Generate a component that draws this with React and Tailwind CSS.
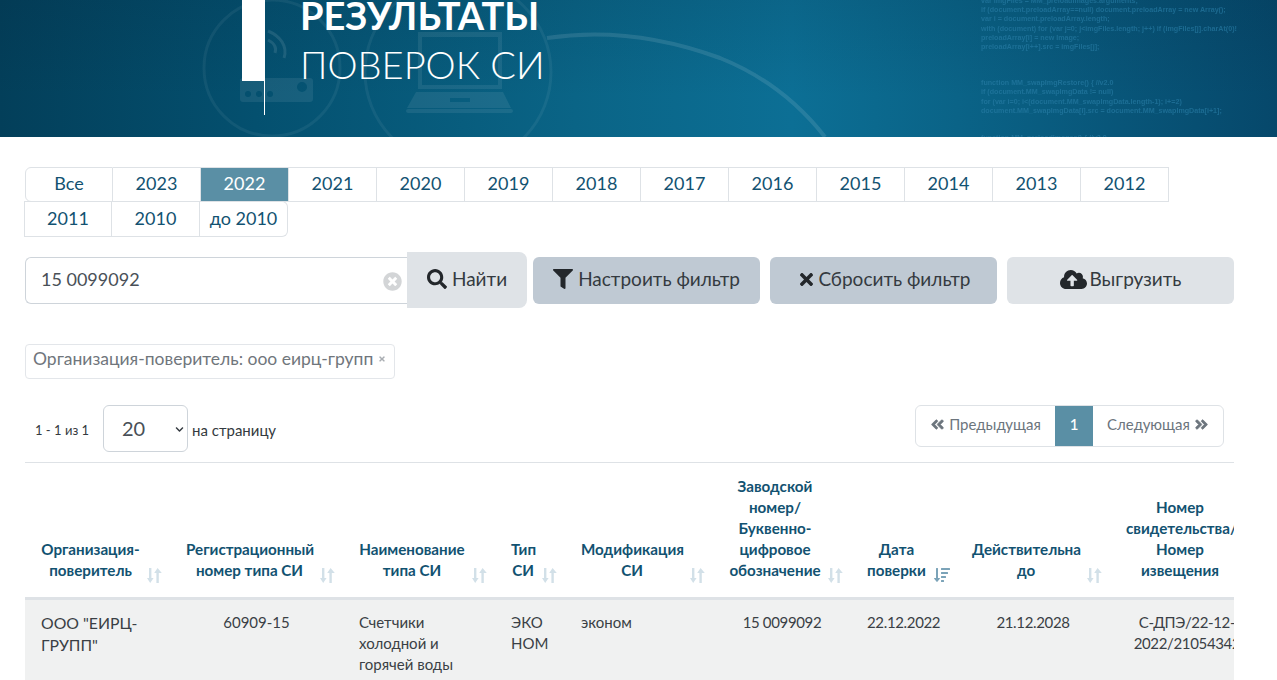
import React from 'react';
import { FaSearch, FaFilter, FaTimes, FaCloudUploadAlt, FaTimesCircle, FaAngleDoubleLeft, FaAngleDoubleRight, FaChevronDown, FaSortAmountDown } from 'react-icons/fa';

const years = ['Все','2023','2022','2021','2020','2019','2018','2017','2016','2015','2014','2013','2012','2011','2010','до 2010'];

const code1 = ['var imgFiles = MM_preloadImages.arguments;','if (document.preloadArray==null) document.preloadArray = new Array();','var i = document.preloadArray.length;','with (document) for (var j=0; j<imgFiles.length; j++) if (imgFiles[j].charAt(0)!','preloadArray[i] = new Image;','preloadArray[i++].src = imgFiles[j];'];
const code2 = ['function MM_swapImgRestore() { //v2.0','if (document.MM_swapImgData != null)','for (var i=0; i<(document.MM_swapImgData.length-1); i+=2)','document.MM_swapImgData[i].src = document.MM_swapImgData[i+1];'];

function Sort({ active }) {
  if (active) {
    return <span className="absolute right-[6px] bottom-[14px] text-[#7ba3b8]"><FaSortAmountDown size={16} /></span>;
  }
  return (
    <svg className="absolute right-[7px] bottom-[14px] text-[#d2e0e8]" width="16" height="15" viewBox="0 0 16 15" fill="currentColor">
      <path d="M2 0h2.4v10H6.6L3.2 15 0 10h2z" />
      <path d="M11.8 15h-2.4V5H7.2L10.6 0 14.8 5h-3z" />
    </svg>
  );
}

function Th({ children, active }) {
  return (
    <th className="relative align-bottom pl-4 pr-[30px] pt-[13px] pb-[16px] text-center text-[15.2px] leading-[21px] font-bold text-[#125271] border-b-[3px] border-[#dee2e6]">
      {children}
      <Sort active={active} />
    </th>
  );
}

function Td({ children, center, num }) {
  return <td className={`align-top px-4 pt-[12px] pb-[14px] text-[15px] leading-[21px] text-[#3a3f45] ${center ? 'text-center' : 'text-left'} ${num ? 'tracking-[-0.35px]' : ''}`}>{children}</td>;
}

function Banner() {
  return (
    <header className="relative h-[137px] overflow-hidden bg-[linear-gradient(90deg,#033f5a_0%,#04506f_20%,#0a6486_45%,#0c6f95_62%,#0a6387_75%,#06486b_100%)]">
      <div className="absolute inset-0 bg-[linear-gradient(180deg,rgba(0,30,50,0.12)_0%,rgba(0,30,50,0)_70%)]" />
      <svg className="absolute inset-0 blur-[0.6px]" width="1277" height="137" viewBox="0 0 1277 137" fill="none">
        <g stroke="#ffffff" strokeOpacity="0.06" strokeWidth="3">
          <circle cx="272" cy="68" r="68" />
          <circle cx="458" cy="72" r="93" />
          <path d="M547 38C600 30 660 36 720 58C765 76 800 105 825 137" strokeOpacity="0.11" strokeWidth="4" />
          <path d="M268 31C280 36 288 46 284 58M268 40C274 43 277 47 275 53" strokeOpacity="0.1" />
        </g>
        <g fill="#ffffff" fillOpacity="0.08">
          <path fillRule="evenodd" d="M243 78h67a3 3 0 0 1 3 3v18a3 3 0 0 1-3 3h-67a3 3 0 0 1-3-3V81a3 3 0 0 1 3-3zm5 13a3 3 0 1 0 0 6 3 3 0 0 0 0-6zm11 0a3 3 0 1 0 0 6 3 3 0 0 0 0-6zm11 0a3 3 0 1 0 0 6 3 3 0 0 0 0-6zm32-9a5 5 0 1 0 0 10 5 5 0 0 0 0-10z" />
          <path fillRule="evenodd" d="M418 32h84v57h-84zm4 5v48h76V37z" />
          <path fillRule="evenodd" d="M416 92h87l8 16H407zm34 6v4h20v-4z" />
          <rect x="406" y="109" width="107" height="4" rx="2" />
        </g>
      </svg>
      <div className="absolute left-[981px] top-[-3px] font-['Liberation_Sans',sans-serif] text-[7.15px] leading-[9.2px] font-bold text-[#2a7fa8] opacity-60 whitespace-nowrap blur-[0.3px]">
        {code1.map((l) => <div key={l}>{l}</div>)}
        <div className="h-[27px]" />
        {code2.map((l) => <div key={l}>{l}</div>)}
        <div className="h-[18px]" />
        <div>function MM_preloadImages() {'{'} //v2.0</div>
      </div>
      <div className="relative flex ml-[242px] items-start">
        <div className="flex items-start">
          <div className="w-[22px] h-[81px] bg-white" />
          <div className="w-px h-[115px] bg-white" />
        </div>
        <div className="ml-[35px] -mt-[9px] text-white">
          <div className="text-[38px] leading-[48px] font-bold">РЕЗУЛЬТАТЫ</div>
          <div className="text-[38px] leading-[48px] font-light mt-[1px]">ПОВЕРОК СИ</div>
        </div>
      </div>
    </header>
  );
}

function YearTabs() {
  return (
    <div className="flex flex-wrap w-[1146px] ml-[24px] mt-[30px]">
      {years.map((y, i) => {
        const active = y === '2022';
        const row2 = i >= 13;
        return (
          <div key={y} className={`w-[88px] flex items-center justify-center pb-[2px] text-[18px] border-[#dee2e6] border-t border-b border-r ${i === 0 ? 'ml-px border-l rounded-l-md' : ''} ${i === 13 ? 'border-l rounded-l-none' : ''} ${row2 ? '-mt-px h-[36px]' : 'h-[35px]'} ${i === 15 ? 'rounded-r-md' : ''} ${active ? 'bg-[#5a8fa5] text-white border-[#5a8fa5]' : 'text-[#125271] bg-white'}`}>
            {y}
          </div>
        );
      })}
    </div>
  );
}

function SearchRow() {
  const btn = 'w-[227px] h-[47px] rounded-md flex items-center justify-center gap-[3px] pb-[2px] text-[19px] text-[#343a40]';
  return (
    <div className="flex items-center mt-[15px] ml-[25px] h-[56px]">
      <div className="relative w-[382px] h-[47px] border border-r-0 border-[#ced4da] rounded-l-md bg-white flex items-center">
        <input readOnly value="15 0099092" className="w-full pl-[15px] pb-[2px] text-[18px] text-[#495057] outline-none bg-transparent" />
        <FaTimesCircle size={19} className="absolute right-[5px] top-[14px] text-[#d3d5d7]" />
      </div>
      <div className="w-[120px] h-[56px] bg-[#dfe3e7] rounded-r-lg flex items-center justify-center gap-[5px] pb-[2px] text-[19px] text-[#343a40]">
        <FaSearch size={20} className="text-[#23272b]" />Найти
      </div>
      <div className={`${btn} ml-[6px] bg-[#bfc9d3]`}><FaFilter size={20} className="mr-[2px] text-[#23272b]" />Настроить фильтр</div>
      <div className={`${btn} ml-[10px] bg-[#bfc9d3]`}><FaTimes size={19} className="text-[#23272b]" />Сбросить фильтр</div>
      <div className={`${btn} ml-[10px] bg-[#dfe3e7]`}><FaCloudUploadAlt size={27} className="text-[#23272b]" />Выгрузить</div>
    </div>
  );
}

function Chip() {
  return (
    <div className="ml-[25px] mt-[36px] w-[370px] h-[35px] border border-[#e3e6ea] rounded flex items-center pl-[7px] pb-[4px] text-[#70767c] text-[17.5px] whitespace-nowrap">
      Организация-поверитель: ооо еирц-групп
      <FaTimes size={8} className="ml-[5px] mb-[2px] text-[#a9adb2]" />
    </div>
  );
}

function Pager() {
  return (
    <div className="flex justify-between items-start mt-[26px] ml-[25px] w-[1199px] h-[57px]">
      <div className="flex items-center text-[15px] text-[#343a40]">
        <span className="ml-[10px] w-[68px] pt-[4px] text-[13px]">1 - 1 из 1</span>
        <div className="relative w-[85px] h-[47px]">
          <select defaultValue="20" className="appearance-none w-full h-full border border-[#ced4da] rounded-md pl-[18px] pb-[2px] text-[20px] text-[#495057] bg-white outline-none">
            <option>20</option>
            <option>50</option>
            <option>100</option>
          </select>
          <FaChevronDown size={9} className="absolute right-[4px] top-[20px] text-[#343a40] pointer-events-none" />
        </div>
        <span className="ml-[4px] pt-[4px]">на страницу</span>
      </div>
      <div className="flex h-[42px] border border-[#dee2e6] rounded-md text-[15px] text-[#6c757d] bg-white overflow-hidden">
        <div className="w-[139px] flex items-center justify-center gap-[4px] pb-[3px]"><FaAngleDoubleLeft size={15} stroke="currentColor" strokeWidth={24} />Предыдущая</div>
        <div className="w-[38px] bg-[#5a8fa5] text-white flex items-center justify-center font-medium pb-[3px]">1</div>
        <div className="w-[130px] flex items-center justify-center gap-[4px] pb-[3px]">Следующая<FaAngleDoubleRight size={15} stroke="currentColor" strokeWidth={24} /></div>
      </div>
    </div>
  );
}

function Table() {
  return (
    <div className="ml-[25px] w-[1209px] overflow-hidden border-t border-[#dee2e6]">
      <table className="table-fixed w-[1239px] border-collapse">
        <colgroup>
          <col className="w-[145px]" />
          <col className="w-[173px]" />
          <col className="w-[152px]" />
          <col className="w-[70px]" />
          <col className="w-[148px]" />
          <col className="w-[138px]" />
          <col className="w-[105px]" />
          <col className="w-[154px]" />
          <col className="w-[154px]" />
        </colgroup>
        <thead>
          <tr>
            <Th>Организация-поверитель</Th>
            <Th>Регистрационный номер типа СИ</Th>
            <Th>Наименование типа СИ</Th>
            <Th>Тип СИ</Th>
            <Th>Модификация СИ</Th>
            <Th>Заводской номер/ Буквенно-цифровое обозначение</Th>
            <Th active>Дата поверки</Th>
            <Th>Действительна до</Th>
            <Th>Номер свидетельства/ Номер извещения</Th>
          </tr>
        </thead>
        <tbody>
          <tr className="bg-[#f0f1f1]">
            <Td><span className="text-[15.8px]">ООО "ЕИРЦ-ГРУПП"</span></Td>
            <Td center>60909-15</Td>
            <Td>Счетчики холодной и горячей воды</Td>
            <Td><span className="break-all">ЭКОНОМ</span></Td>
            <Td>эконом</Td>
            <Td center num>15 0099092</Td>
            <Td center num>22.12.2022</Td>
            <Td center num>21.12.2028</Td>
            <Td center num>С-ДПЭ/22-12-2022/21054342</Td>
          </tr>
        </tbody>
      </table>
    </div>
  );
}

export default function App() {
  return (
    <div className="h-[680px] overflow-hidden bg-white font-[Lato,'Noto_Sans',sans-serif]">
      <Banner />
      <YearTabs />
      <SearchRow />
      <Chip />
      <Pager />
      <Table />
    </div>
  );
}
